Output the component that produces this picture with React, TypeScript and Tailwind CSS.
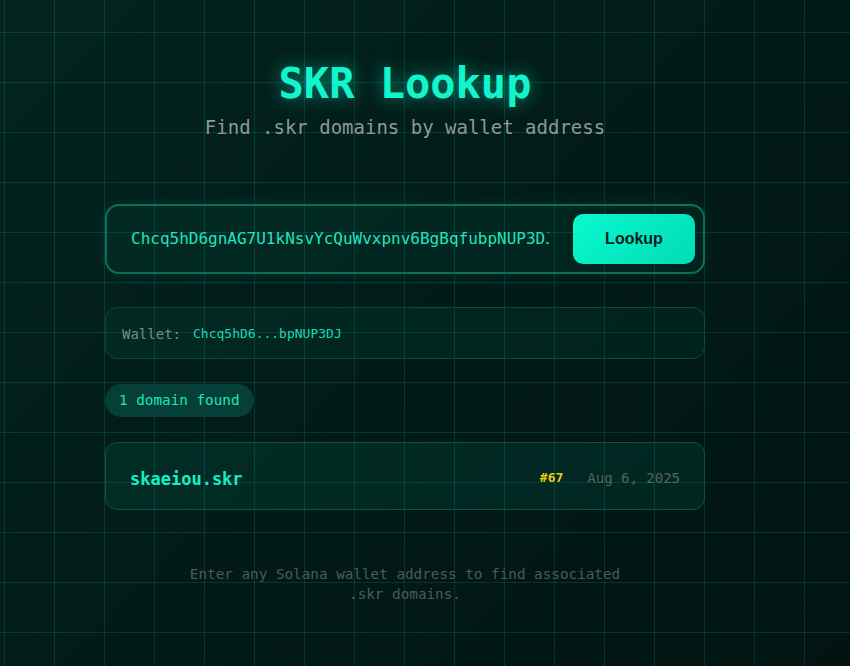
import { useState } from "react";

// Full address shown in the input, and the shortened form for the wallet row
const ADDRESS = "Chcq5hD6gnAG7U1kNsvYcQuWvxpnv6BgBqfubpNUP3DJ";

interface Domain {
  name: string;
  index: number;
  date: string;
}

const domains: Domain[] = [{ name: "skaeiou.skr", index: 67, date: "Aug 6, 2025" }];

function shorten(addr: string) {
  return `${addr.slice(0, 8)}...${addr.slice(-8)}`;
}

export default function App() {
  const [address, setAddress] = useState(ADDRESS);

  return (
    <div className="min-h-screen w-full bg-[linear-gradient(135deg,#03241f_0%,#021b18_50%,#011412_100%)] font-['DejaVu_Sans_Mono',monospace]">
      <div className="min-h-[666px] w-full bg-[linear-gradient(rgba(0,230,185,0.15)_1px,transparent_1px),linear-gradient(90deg,rgba(0,230,185,0.15)_1px,transparent_1px)] bg-[size:50px_50px] bg-[position:4px_32px] pr-[40px]">
        <div className="mx-auto flex w-[600px] flex-col items-center pt-[59px]">
          {/* Header */}
          <h1 className="text-[42px] leading-[50px] font-bold text-[#12f5cc] [text-shadow:0_0_18px_rgba(0,245,200,0.55)]">
            SKR Lookup
          </h1>
          <p className="mt-1 text-[19px] leading-[28px] text-[#8c9996]">
            Find .skr domains by wallet address
          </p>

          {/* Search bar */}
          <div className="mt-[63px] flex h-[70px] w-full items-center gap-6 rounded-[14px] border-2 border-[#0e6d5c] bg-[rgba(0,200,160,0.06)] p-2 shadow-[0_0_20px_rgba(0,245,200,0.08)]">
            <input
              value={address}
              onChange={(e) => setAddress(e.target.value)}
              className="min-w-0 flex-1 bg-transparent pl-4 text-[16px] text-[#1ce6bf] outline-none"
            />
            <button className="h-[50px] w-[122px] shrink-0 rounded-[10px] bg-[linear-gradient(135deg,#0af8cf,#00dcb5)] font-['Liberation_Sans',sans-serif] text-[16px] font-bold text-[#0b1d1a]">
              Lookup
            </button>
          </div>

          {/* Wallet row */}
          <div className="mt-[33px] flex h-[52px] w-full items-center gap-3 rounded-[12px] border border-[#0b4a40] bg-[rgba(0,200,160,0.06)] px-4 pt-[2px]">
            <span className="text-[14px] text-[#7d8a87]">Wallet:</span>
            <span className="text-[13px] text-[#17d9b4]">{shorten(address)}</span>
          </div>

          {/* Count badge */}
          <div className="mt-[25px] self-start">
            <span className="inline-flex h-[33px] items-center rounded-full bg-[#053f37] px-[14px] text-[14.3px] text-[#1be6bf]">
              {domains.length} domain found
            </span>
          </div>

          {/* Results */}
          <div className="mt-[25px] flex w-full flex-col gap-3">
            {domains.map((d) => (
              <div
                key={d.name}
                className="flex h-[68px] w-full items-center justify-between rounded-[12px] border border-[#0d5246] bg-[rgba(0,200,160,0.09)] px-6 pt-1"
              >
                <span className="pt-1 text-[17px] font-bold text-[#12efc6]">{d.name}</span>
                <div className="flex items-center gap-6">
                  <span className="text-[13px] font-bold text-[#f2c811]">#{d.index}</span>
                  <span className="text-[14px] text-[#56625f]">{d.date}</span>
                </div>
              </div>
            ))}
          </div>

          {/* Footer hint */}
          <p className="mt-[54px] max-w-md text-center text-[14.3px] leading-[20px] text-[#4c5b58]">
            Enter any Solana wallet address to find associated .skr domains.
          </p>
        </div>
      </div>
    </div>
  );
}
